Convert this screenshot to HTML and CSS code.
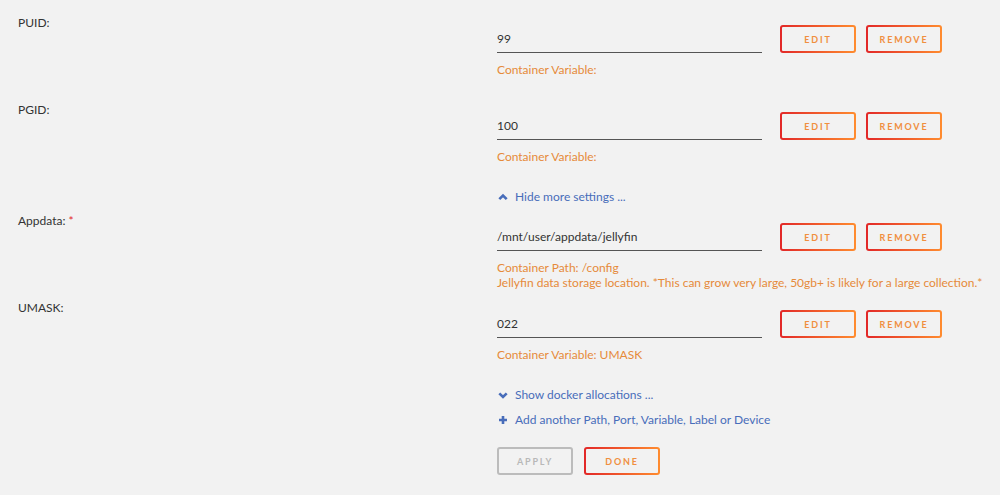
FILE: index.html
```html
<!DOCTYPE html>
<html>
<head>
<meta charset="utf-8">
<link rel="stylesheet" href="styles.css">
</head>
<body>
<div class="page">
  <div class="row">
    <div class="label">PUID:</div>
    <div class="field">
      <div class="input-line">
        <div class="input">99</div>
        <div class="btn">EDIT</div>
        <div class="btn btn-remove">REMOVE</div>
      </div>
      <div class="desc">Container Variable:</div>
    </div>
  </div>
  <div class="row">
    <div class="label">PGID:</div>
    <div class="field">
      <div class="input-line">
        <div class="input">100</div>
        <div class="btn">EDIT</div>
        <div class="btn btn-remove">REMOVE</div>
      </div>
      <div class="desc">Container Variable:</div>
    </div>
  </div>
  <div class="links">
    <div class="link link-hide">
      <svg class="ico" viewBox="0 0 10 10" width="10" height="10"><path d="M1.3 7.2 L5 3.5 L8.7 7.2" fill="none" stroke="#486dba" stroke-width="2.6" stroke-linecap="butt"/></svg>
      <span>Hide more settings ...</span>
    </div>
  </div>
  <div class="row">
    <div class="label">Appdata: <span class="req">*</span></div>
    <div class="field">
      <div class="input-line">
        <div class="input">/mnt/user/appdata/jellyfin</div>
        <div class="btn">EDIT</div>
        <div class="btn btn-remove">REMOVE</div>
      </div>
      <div class="desc">Container Path: /config<br>Jellyfin data storage location. *This can grow very large, 50gb+ is likely for a large collection.*</div>
    </div>
  </div>
  <div class="row">
    <div class="label">UMASK:</div>
    <div class="field">
      <div class="input-line">
        <div class="input">022</div>
        <div class="btn">EDIT</div>
        <div class="btn btn-remove">REMOVE</div>
      </div>
      <div class="desc">Container Variable: UMASK</div>
    </div>
  </div>
  <div class="links">
    <div class="link link-show">
      <svg class="ico" viewBox="0 0 10 10" width="10" height="10"><path d="M1.3 3.3 L5 7 L8.7 3.3" fill="none" stroke="#486dba" stroke-width="2.6" stroke-linecap="butt"/></svg>
      <span>Show docker allocations ...</span>
    </div>
    <div class="link link-add">
      <svg class="ico" viewBox="0 0 10 10" width="10" height="10"><path d="M5 1 V9 M1 5 H9" fill="none" stroke="#486dba" stroke-width="2.6"/></svg>
      <span>Add another Path, Port, Variable, Label or Device</span>
    </div>
    <div class="actions">
      <div class="btn btn-disabled">APPLY</div>
      <div class="btn btn-done">DONE</div>
    </div>
  </div>
</div>
</body>
</html>
```

FILE: styles.css
```css
html, body {
  margin: 0;
  background: #f2f2f2;
}
body {
  font-family: Lato, "Open Sans", sans-serif;
  font-size: 12px;
  color: #333;
}
.page {
  padding: 13px 0 0 18px;
}
.row {
  display: grid;
  grid-template-columns: 479px 1fr;
  min-height: 87px;
  align-items: start;
}
.label {
  line-height: 20px;
  color: #333;
}
.req {
  color: #e22828;
}
.field {
  padding-top: 12px;
}
.input-line {
  display: flex;
  align-items: center;
}
.input {
  width: 265px;
  height: 28px;
  box-sizing: border-box;
  border-bottom: 1px solid #555;
  display: flex;
  align-items: center;
  color: #333;
}
.btn {
  width: 76px;
  height: 28px;
  box-sizing: border-box;
  border: 2px solid transparent;
  border-radius: 3px;
  background: linear-gradient(#f2f2f2, #f2f2f2) padding-box, linear-gradient(90deg, #e22828, #ff8c2f) border-box;
  color: #f08f3f;
  font-size: 9px;
  font-weight: bold;
  letter-spacing: 1.8px;
  display: flex;
  align-items: center;
  justify-content: center;
  margin-left: 18px;
}
.btn-remove {
  margin-left: 10px;
}
.desc {
  margin-top: 9px;
  line-height: 15px;
  color: #e68a3a;
}
.links {
  margin-left: 479px;
}
.link {
  display: flex;
  align-items: center;
  line-height: 18px;
  color: #486dba;
}
.link .ico {
  margin: 0 7px 0 1px;
}
.link-hide {
  margin-top: 1px;
  margin-bottom: 5px;
}
.link-show {
  margin-top: 1px;
}
.link-add {
  margin-top: 7px;
}
.actions {
  display: flex;
  margin-top: 18px;
}
.actions .btn {
  margin-left: 0;
}
.actions .btn-done {
  margin-left: 11px;
}
.btn-disabled {
  background: linear-gradient(#f2f2f2, #f2f2f2) padding-box, linear-gradient(#bcbcbc, #bcbcbc) border-box;
  color: #b8b8b8;
}
```
